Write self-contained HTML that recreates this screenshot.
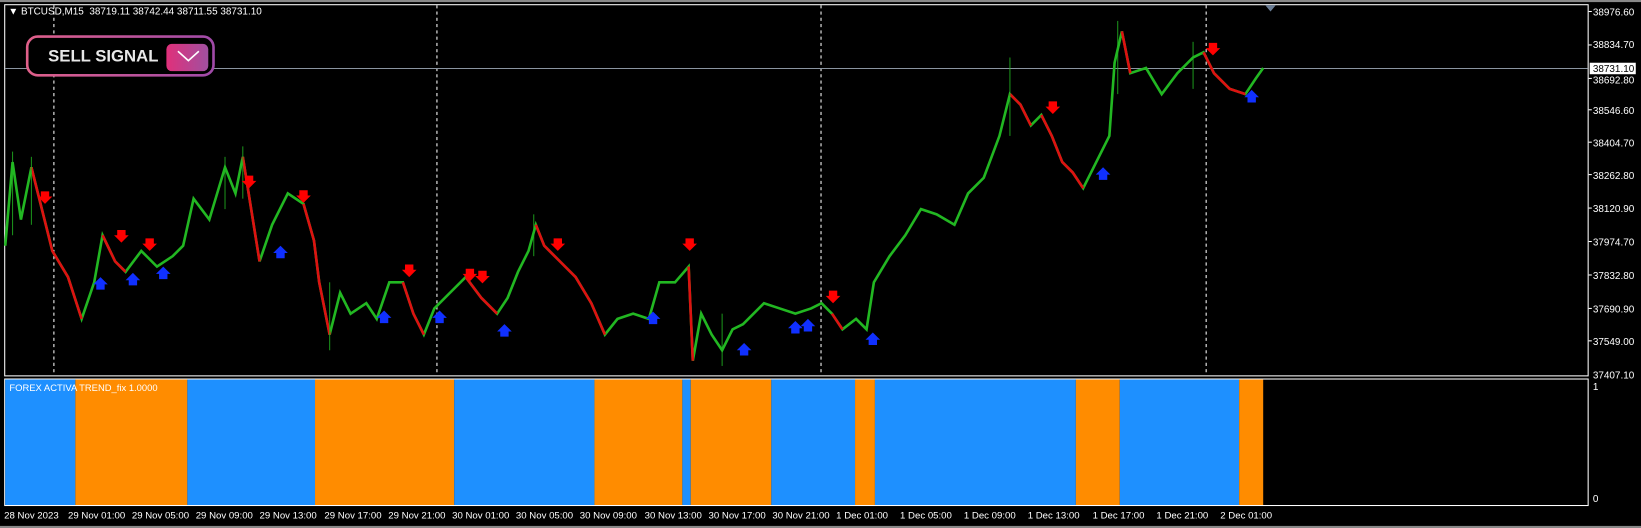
<!DOCTYPE html>
<html><head><meta charset="utf-8"><style>
body{margin:0;background:#000;width:1641px;height:528px;overflow:hidden;font-family:"Liberation Sans",sans-serif}
svg{display:block}
</style></head><body>
<svg width="1641" height="528" viewBox="0 0 1568 505" preserveAspectRatio="none" xmlns="http://www.w3.org/2000/svg" font-family="Liberation Sans, sans-serif">
<rect width="1568" height="505" fill="#000"/>
<rect x="0" y="0" width="1568" height="2" fill="#888"/>
<rect x="0" y="503" width="1568" height="2" fill="#888"/>
<rect x="4.5" y="4.5" width="1513" height="355" fill="none" stroke="#fff"/>
<rect x="4.5" y="362.5" width="1513" height="121" fill="none" stroke="#fff"/>
<g stroke="#fff" stroke-dasharray="3,3" stroke-width="1">
<line x1="51.5" y1="5" x2="51.5" y2="359"/><line x1="417.5" y1="5" x2="417.5" y2="359"/>
<line x1="784.5" y1="5" x2="784.5" y2="359"/><line x1="1152.5" y1="5" x2="1152.5" y2="359"/>
</g>
<line x1="5" y1="65.5" x2="1517" y2="65.5" stroke="#8a94a0"/>
<polyline fill="none" stroke="#22b722" stroke-width="2.5" points="5,235 12,155 20,210 30,160 40,200 50,240 65,265 78,305 90,270 98,225 110,250 120,260 135,240 150,255 165,245 175,235 185,190 200,210 215,160 225,185 232,150 240,200 248,250 260,215 275,185 290,195 300,230 305,270 315,320 325,280 335,300 350,290 360,305 372,270 385,270 395,300 405,320 415,295 430,280 445,265 460,285 475,300 485,285 495,260 505,240 512,215 520,235 535,250 550,265 565,290 578,320 590,305 605,300 620,305 630,270 645,270 658,255 662,345 670,300 680,320 690,335 700,315 710,310 720,300 730,290 745,295 760,300 775,295 785,290 795,300 805,315 818,305 828,315 835,270 850,245 865,225 880,200 895,205 912,215 925,185 940,170 955,130 965,90 975,100 985,120 995,110 1005,130 1015,155 1025,165 1035,180 1045,160 1060,130 1065,60 1072,30 1080,70 1095,65 1110,90 1125,70 1140,55 1150,50 1160,70 1175,85 1190,90 1200,75 1207,65"/>
<g stroke="#d11" stroke-width="2.5" fill="none">
<polyline points="30,160 40,200 50,240 65,265 78,305"/><polyline points="98,225 110,250 120,260"/>
<polyline points="232,150 240,200 248,250"/><polyline points="290,195 300,230 305,270 315,320"/>
<polyline points="385,270 395,300 405,320"/><polyline points="445,265 460,285 475,300"/>
<polyline points="512,215 520,235 535,250 550,265 565,290 578,320"/><polyline points="658,255 662,345"/>
<polyline points="795,300 805,315"/><polyline points="965,90 975,100 985,120"/>
<polyline points="995,110 1005,130 1015,155 1025,165 1035,180"/><polyline points="1072,30 1080,70"/><polyline points="1150,50 1160,70 1175,85 1190,90"/>
</g>
<g stroke="#22b722" stroke-width="1" opacity="0.8">
<line x1="12" y1="145" x2="12" y2="225"/><line x1="30" y1="150" x2="30" y2="215"/><line x1="215" y1="150" x2="215" y2="200"/><line x1="232" y1="140" x2="232" y2="190"/><line x1="510" y1="205" x2="510" y2="245"/><line x1="965" y1="55" x2="965" y2="130"/><line x1="1068" y1="20" x2="1068" y2="90"/><line x1="1140" y1="40" x2="1140" y2="85"/><line x1="690" y1="300" x2="690" y2="350"/><line x1="315" y1="270" x2="315" y2="335"/>
</g>
<g fill="#f00">
<path d="M39,183h8v5h3l-7,7l-7,-7h3z"/><path d="M112,220h8v5h3l-7,7l-7,-7h3z"/><path d="M139,228h8v5h3l-7,7l-7,-7h3z"/><path d="M234,168h8v5h3l-7,7l-7,-7h3z"/><path d="M286,182h8v5h3l-7,7l-7,-7h3z"/><path d="M387,253h8v5h3l-7,7l-7,-7h3z"/><path d="M445,257h8v5h3l-7,7l-7,-7h3z"/><path d="M457,259h8v5h3l-7,7l-7,-7h3z"/><path d="M529,228h8v5h3l-7,7l-7,-7h3z"/><path d="M655,228h8v5h3l-7,7l-7,-7h3z"/><path d="M792,278h8v5h3l-7,7l-7,-7h3z"/><path d="M1002,97h8v5h3l-7,7l-7,-7h3z"/><path d="M1155,41h8v5h3l-7,7l-7,-7h3z"/>
</g>
<g fill="#1030ff">
<path d="M92,277h8v-5h3l-7,-7l-7,7h3z"/><path d="M123,273h8v-5h3l-7,-7l-7,7h3z"/><path d="M152,267h8v-5h3l-7,-7l-7,7h3z"/><path d="M264,247h8v-5h3l-7,-7l-7,7h3z"/><path d="M363,309h8v-5h3l-7,-7l-7,7h3z"/><path d="M416,309h8v-5h3l-7,-7l-7,7h3z"/><path d="M478,322h8v-5h3l-7,-7l-7,7h3z"/><path d="M620,310h8v-5h3l-7,-7l-7,7h3z"/><path d="M707,340h8v-5h3l-7,-7l-7,7h3z"/><path d="M756,319h8v-5h3l-7,-7l-7,7h3z"/><path d="M768,317h8v-5h3l-7,-7l-7,7h3z"/><path d="M830,330h8v-5h3l-7,-7l-7,7h3z"/><path d="M1050,172h8v-5h3l-7,-7l-7,7h3z"/><path d="M1192,98h8v-5h3l-7,-7l-7,7h3z"/>
</g>
<path d="M1209,5l5,6l5,-6z" fill="#6a7d95"/>
<defs><linearGradient id="g" x1="0" x2="1"><stop offset="0" stop-color="#e0608a"/><stop offset="1" stop-color="#a04aa8"/></linearGradient>
<linearGradient id="g2" x1="0" x2="1"><stop offset="0" stop-color="#e0307a"/><stop offset="1" stop-color="#a050a0"/></linearGradient></defs>
<rect x="26" y="35" width="178" height="37" rx="10" fill="#000" stroke="url(#g)" stroke-width="2.5"/>
<text x="46" y="59" fill="#e8e8e8" font-size="16" font-weight="bold">SELL SIGNAL</text>
<rect x="159" y="42" width="40" height="26" rx="5" fill="url(#g2)"/>
<path d="M170,49l10,9l10,-9" fill="none" stroke="#fff" stroke-width="1.5"/>
<text x="8" y="14" fill="#fff" font-size="9.5">&#9660; BTCUSD,M15&#160; 38719.11 38742.44 38711.55 38731.10</text>
<g fill="#fff" font-size="9.5">
<text x="1522" y="15">38976.60</text><text x="1522" y="46">38834.70</text><text x="1522" y="80">38692.80</text><text x="1522" y="109">38546.60</text><text x="1522" y="140">38404.70</text><text x="1522" y="171">38262.80</text><text x="1522" y="203">38120.90</text><text x="1522" y="235">37974.70</text><text x="1522" y="267">37832.80</text><text x="1522" y="299">37690.90</text><text x="1522" y="330">37549.00</text><text x="1522" y="362">37407.10</text>
<text x="1522" y="373">1</text><text x="1522" y="480">0</text>
</g>
<g stroke="#fff"><line x1="1518" y1="11" x2="1521" y2="11"/><line x1="1518" y1="43" x2="1521" y2="43"/><line x1="1518" y1="75" x2="1521" y2="75"/><line x1="1518" y1="105" x2="1521" y2="105"/><line x1="1518" y1="136" x2="1521" y2="136"/><line x1="1518" y1="167" x2="1521" y2="167"/><line x1="1518" y1="199" x2="1521" y2="199"/><line x1="1518" y1="231" x2="1521" y2="231"/><line x1="1518" y1="263" x2="1521" y2="263"/><line x1="1518" y1="295" x2="1521" y2="295"/><line x1="1518" y1="326" x2="1521" y2="326"/></g>
<rect x="1519" y="60" width="44" height="11" fill="#fff"/>
<text x="1522" y="69" fill="#000" font-size="9.5">38731.10</text>
<g>
<rect x="5" y="363" width="67" height="120" fill="#1e90ff"/><rect x="72" y="363" width="107" height="120" fill="#ff8c00"/>
<rect x="179" y="363" width="122" height="120" fill="#1e90ff"/><rect x="301" y="363" width="133" height="120" fill="#ff8c00"/>
<rect x="434" y="363" width="134" height="120" fill="#1e90ff"/><rect x="568" y="363" width="84" height="120" fill="#ff8c00"/>
<rect x="652" y="363" width="8" height="120" fill="#1e90ff"/><rect x="660" y="363" width="77" height="120" fill="#ff8c00"/>
<rect x="737" y="363" width="80" height="120" fill="#1e90ff"/><rect x="817" y="363" width="19" height="120" fill="#ff8c00"/>
<rect x="836" y="363" width="192" height="120" fill="#1e90ff"/><rect x="1028" y="363" width="42" height="120" fill="#ff8c00"/>
<rect x="1070" y="363" width="114" height="120" fill="#1e90ff"/><rect x="1184" y="363" width="23" height="120" fill="#ff8c00"/>
</g>
<text x="9" y="374" fill="#fff" font-size="9">FOREX ACTIVA TREND_fix 1.0000</text>
<g fill="#fff" font-size="9.2">
<text x="4" y="496">28 Nov 2023</text><text x="65" y="496">29 Nov 01:00</text><text x="126" y="496">29 Nov 05:00</text><text x="187" y="496">29 Nov 09:00</text><text x="248" y="496">29 Nov 13:00</text><text x="310" y="496">29 Nov 17:00</text><text x="371" y="496">29 Nov 21:00</text><text x="432" y="496">30 Nov 01:00</text><text x="493" y="496">30 Nov 05:00</text><text x="554" y="496">30 Nov 09:00</text><text x="616" y="496">30 Nov 13:00</text><text x="677" y="496">30 Nov 17:00</text><text x="738" y="496">30 Nov 21:00</text><text x="799" y="496">1 Dec 01:00</text><text x="860" y="496">1 Dec 05:00</text><text x="921" y="496">1 Dec 09:00</text><text x="982" y="496">1 Dec 13:00</text><text x="1044" y="496">1 Dec 17:00</text><text x="1105" y="496">1 Dec 21:00</text><text x="1166" y="496">2 Dec 01:00</text>
</g>
</svg>
</body></html>
